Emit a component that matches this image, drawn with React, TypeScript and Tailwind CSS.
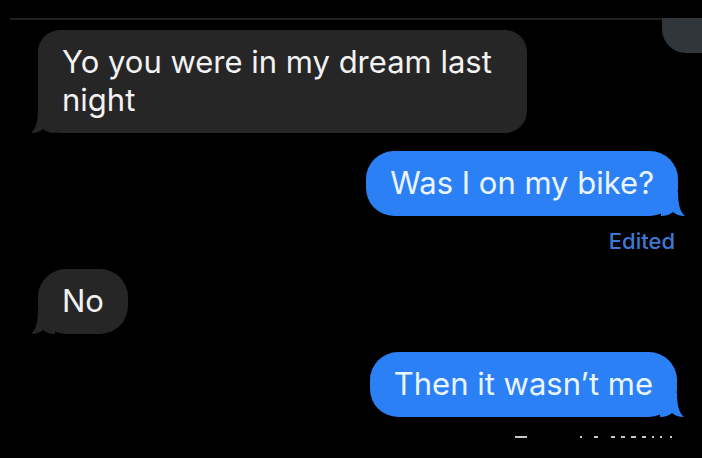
import React from 'react';

type Side = 'in' | 'out';

const Tail = ({ side, color }: { side: Side; color: string }) => (
  <svg
    width="24"
    height="24"
    viewBox="0 0 24 24"
    className={
      side === 'in'
        ? 'absolute bottom-0 left-[-7px]'
        : 'absolute bottom-0 right-[-7px] scale-x-[-1]'
    }
  >
    <path d="M7 0 C7 12 5 20 0 24 C5 24 9 22.5 12 20 C15 22.5 19 24 24 24 L24 0 Z" fill={color} />
  </svg>
);

const Bubble = ({ side, children, className = '' }: { side: Side; children: React.ReactNode; className?: string }) => {
  const incoming = side === 'in';
  return (
    <div
      className={`relative px-[24px] pt-[13px] pb-[14px] text-[31px] leading-[38px] ${
        incoming ? 'bg-[#262627] text-[#f2f2f2]' : 'bg-[#2c80f6] text-[#eaf5ff]'
      } ${className}`}
    >
      {children}
      <Tail side={side} color={incoming ? '#262627' : '#2c80f6'} />
    </div>
  );
};

// tops of the clipped "Read" line at the bottom of the shot
const marks = [
  { ml: 0, w: 12 },
  { ml: 53, w: 2 },
  { ml: 12, w: 4 },
  { ml: 13, w: 4 },
  { ml: 6, w: 4 },
  { ml: 6, w: 5 },
  { ml: 6, w: 4 },
  { ml: 6, w: 2 },
  { ml: 6, w: 2 },
  { ml: 8, w: 2 },
];

export default function App() {
  return (
    <div
      className="w-[702px] h-[458px] overflow-hidden bg-black pt-[18px] flex flex-col"
      style={{ fontFamily: 'Inter, "Liberation Sans", sans-serif' }}
    >
      {/* top divider + end of previous bubble */}
      <div className="flex items-start">
        <div className="flex-1 flex flex-col">
          <div className="ml-[10px] h-[2px] bg-[#1f1f1f]" />
          <Bubble side="in" className="mt-[10px] ml-[38px] w-[489px] rounded-[22px]">
            Yo you were in my dream last night
          </Bubble>
        </div>
        <div className="w-[40px] h-[35px] shrink-0 rounded-bl-[24px] bg-[#30363a]" />
      </div>

      <div className="flex flex-col items-end pr-[24px] mt-[18px]">
        <Bubble side="out" className="rounded-[28px]">
          Was I on my bike?
        </Bubble>
        <div className="mt-[13px] mr-[3px] text-[22px] leading-[24px] font-medium text-[#3f78d4]">Edited</div>
      </div>

      <div className="flex pl-[38px] mt-[16px]">
        <Bubble side="in" className="rounded-[28px]">
          No
        </Bubble>
      </div>

      <div className="flex justify-end pr-[25px] mt-[18px]">
        <Bubble side="out" className="rounded-[28px]">
          Then it wasn’t me
        </Bubble>
      </div>

      <div className="flex items-start pl-[515px] mt-[19px]">
        {marks.map((m, i) => (
          <div key={i} className="h-[2px] bg-[#c9c9c9]" style={{ marginLeft: m.ml, width: m.w }} />
        ))}
      </div>
    </div>
  );
}
